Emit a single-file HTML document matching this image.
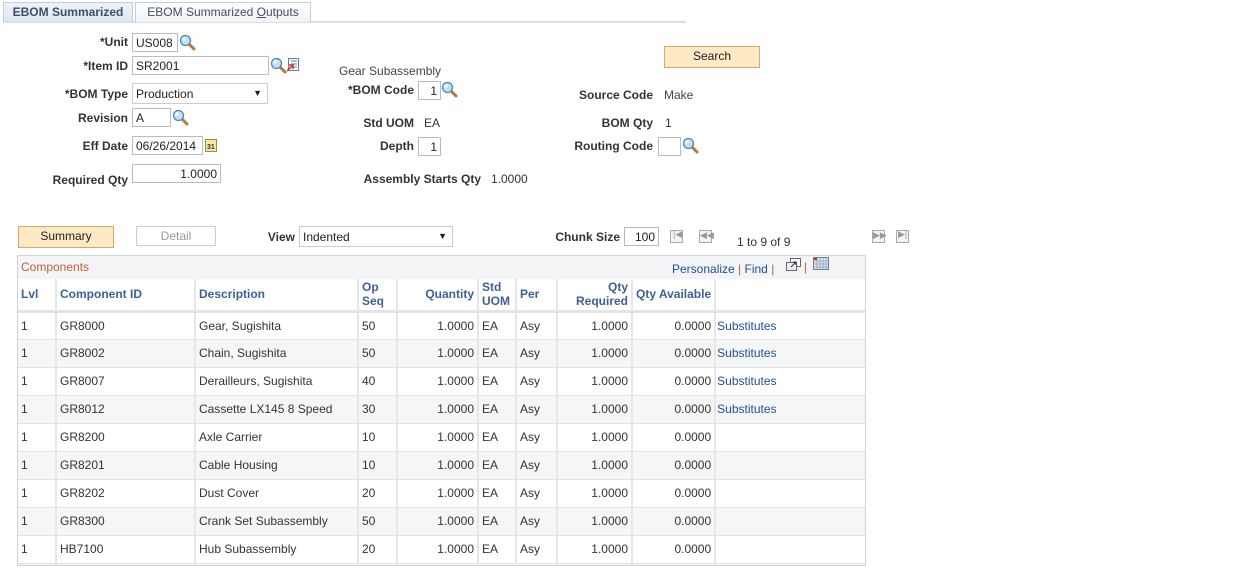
<!DOCTYPE html>
<html><head><meta charset="utf-8"><style>
*{margin:0;padding:0;box-sizing:border-box}
body{width:1257px;height:573px;background:#fff;font-family:"Liberation Sans",Arial,sans-serif;font-size:12px;color:#333;position:relative;overflow:hidden}
.a{position:absolute;white-space:nowrap}
.lb{position:absolute;font-weight:bold;color:#333;text-align:right;white-space:nowrap}
.in{position:absolute;border:1px solid #bbb;background:#fff;padding:1px 3px;height:19px;line-height:16px;font-size:12px;color:#222;white-space:nowrap}
.r{text-align:right}
.mag{position:absolute;width:17px;height:17px}
.btn{position:absolute;background:#fde9c4;border:1px solid #e0a56a;text-align:center;line-height:19px;color:#222}
.nav{position:absolute;width:13px;height:13px;border:1px solid #aaa;background:#f4f4f4}
table{border-collapse:collapse;position:absolute;left:18px;top:279px;width:847px}
td,th{height:28px;font-size:12px;padding:0 3px;border-right:2px solid #e6e6e6;border-bottom:1px solid #e3e3e3;white-space:nowrap;background:#fff}
th{color:#3d6194;font-weight:bold;text-align:left;height:32px;background:#fff;border-bottom:3px solid #e4e4e4;line-height:14px}
tr:nth-child(odd) td{background:#f6f6f6}
td a{color:#234e9a;text-decoration:none}
</style></head><body>
<svg width="0" height="0" style="position:absolute"><defs>
<g id="m"><line x1="9" y1="9" x2="15" y2="15" stroke="#b57a3a" stroke-width="3" stroke-linecap="round"/><circle cx="6.5" cy="6.5" r="5" fill="#bfe0f5" stroke="#4f86b6" stroke-width="1.3"/><circle cx="5" cy="5" r="1.8" fill="#fff" opacity=".8"/></g>
</defs></svg>

<div class="a" style="left:3px;top:21px;width:683px;height:2px;background:#d5e1ee"></div>
<div class="a" style="left:3px;top:2px;width:130px;height:20px;background:linear-gradient(#eef3f9,#dde6f0);border:1px solid #c3cfdc;border-bottom:none;font-weight:bold;color:#3d4f66;line-height:19px;text-align:center">EBOM Summarized</div>
<div class="a" style="left:135px;top:2px;width:176px;height:20px;background:linear-gradient(#fff,#f0f2f5);border:1px solid #c3cfdc;border-bottom:none;color:#3d4f66;line-height:19px;text-align:center">EBOM Summarized <u>O</u>utputs</div>

<div class="lb" style="right:1129px;top:35px">*Unit</div>
<div class="in" style="left:132px;top:33px;width:46px">US008</div>
<svg class="mag" style="left:179px;top:34px"><use href="#m"/></svg>

<div class="lb" style="right:1129px;top:59px">*Item ID</div>
<div class="in" style="left:132px;top:56px;width:137px">SR2001</div>
<svg class="mag" style="left:270px;top:57px"><use href="#m"/></svg>
<svg class="a" style="left:287px;top:58px" width="13" height="14"><rect x="1.5" y=".5" width="10" height="12" fill="#fff" stroke="#5a7fa8"/><line x1="4" y1="3" x2="10" y2="3" stroke="#5a7fa8"/><line x1="4" y1="6" x2="10" y2="6" stroke="#5a7fa8"/><line x1="4" y1="9" x2="10" y2="9" stroke="#5a7fa8"/><path d="M0 13 L6 7 M2 7 L6 7 L6 11" stroke="#d03a2a" stroke-width="1.6" fill="none"/></svg>

<div class="lb" style="right:1129px;top:87px">*BOM Type</div>
<div class="in" style="left:132px;top:83px;width:136px;height:21px;line-height:18px;border-color:#ccc">Production<span style="position:absolute;right:5px;top:0;font-size:9px">▼</span></div>

<div class="lb" style="right:1129px;top:111px">Revision</div>
<div class="in" style="left:132px;top:108px;width:39px">A</div>
<svg class="mag" style="left:172px;top:109px"><use href="#m"/></svg>

<div class="lb" style="right:1129px;top:139px">Eff Date</div>
<div class="in" style="left:132px;top:136px;width:71px">06/26/2014</div>
<svg class="a" style="left:205px;top:138px" width="12" height="14"><rect x=".5" y="1.5" width="11" height="12" fill="#f7e7a8" stroke="#a08a40"/><text x="2" y="11" font-size="7" font-weight="bold" fill="#333" font-family="Liberation Sans">31</text></svg>

<div class="lb" style="right:1129px;top:173px">Required Qty</div>
<div class="in r" style="left:132px;top:164px;width:89px">1.0000</div>

<div class="a" style="left:339px;top:64px;color:#444">Gear Subassembly</div>
<div class="lb" style="right:843px;top:83px">*BOM Code</div>
<div class="in r" style="left:418px;top:81px;width:23px">1</div>
<svg class="mag" style="left:441px;top:81px"><use href="#m"/></svg>
<div class="lb" style="right:843px;top:116px">Std UOM</div>
<div class="a" style="left:424px;top:116px">EA</div>
<div class="lb" style="right:843px;top:139px">Depth</div>
<div class="in r" style="left:418px;top:137px;width:23px">1</div>
<div class="lb" style="right:776px;top:172px">Assembly Starts Qty</div>
<div class="a" style="left:491px;top:172px">1.0000</div>

<div class="btn" style="left:664px;top:46px;width:96px;height:22px">Search</div>
<div class="lb" style="right:604px;top:88px">Source Code</div>
<div class="a" style="left:664px;top:88px;color:#444">Make</div>
<div class="lb" style="right:604px;top:116px">BOM Qty</div>
<div class="a" style="left:665px;top:116px">1</div>
<div class="lb" style="right:604px;top:139px">Routing Code</div>
<div class="in" style="left:658px;top:137px;width:23px"></div>
<svg class="mag" style="left:682px;top:137px"><use href="#m"/></svg>

<div class="btn" style="left:18px;top:226px;width:96px;height:22px">Summary</div>
<div class="a" style="left:136px;top:226px;width:80px;height:20px;border:1px solid #ccc;color:#999;text-align:center;line-height:18px">Detail</div>
<div class="lb" style="right:962px;top:230px">View</div>
<div class="in" style="left:299px;top:226px;width:154px;height:21px;line-height:18px;border-color:#ccc">Indented<span style="position:absolute;right:5px;top:0;font-size:9px">▼</span></div>
<div class="lb" style="right:637px;top:230px">Chunk Size</div>
<div class="in r" style="left:624px;top:227px;width:35px">100</div>
<div class="nav" style="left:670px;top:230px"></div><div class="a" style="left:673px;top:229px;font-size:9px;color:#999">|◀</div>
<div class="nav" style="left:699px;top:230px"></div><div class="a" style="left:700px;top:230px;font-size:9px;color:#999">◀◀</div>
<div class="a" style="left:737px;top:235px;color:#333">1 to 9 of 9</div>
<div class="nav" style="left:872px;top:230px"></div><div class="a" style="left:873px;top:230px;font-size:9px;color:#999">▶▶</div>
<div class="nav" style="left:896px;top:230px"></div><div class="a" style="left:898px;top:229px;font-size:9px;color:#999">▶|</div>

<div class="a" style="left:17px;top:255px;width:849px;height:311px;border:1px solid #ccd3da;background:#f2f4f6"></div>
<div class="a" style="left:21px;top:260px;color:#c0632d">Components</div>
<div class="a" style="left:672px;top:262px;color:#234e9a">Personalize <span style="color:#c0632d">|</span> Find <span style="color:#c0632d">|</span></div>
<svg class="a" style="left:786px;top:258px" width="16" height="14"><rect x="4.5" y=".5" width="10" height="8" fill="#fff" stroke="#667"/><rect x=".5" y="4.5" width="10" height="8" fill="#eee" stroke="#667"/><path d="M5 9 L10 4 M7 4 H10 V7" stroke="#334" fill="none"/></svg>
<div class="a" style="left:804px;top:260px;color:#c0632d">|</div>
<svg class="a" style="left:813px;top:257px" width="16" height="13"><rect x=".5" y=".5" width="15" height="12" fill="#dfe6f0" stroke="#6a7f9c"/><path d="M1 4H15M1 7H15M1 10H15M4 1V12M7 1V12M10 1V12M13 1V12" stroke="#8a9bb5" stroke-width=".7"/><rect x="1" y="1" width="3" height="2" fill="#e02020"/></svg>

<table>
<tr><th style="width:38px">Lvl</th><th style="width:139px">Component ID</th><th style="width:163px">Description</th><th style="width:39px">Op<br>Seq</th><th style="width:81px;text-align:right">Quantity</th><th style="width:38px">Std<br>UOM</th><th style="width:41px">Per</th><th style="width:75px;text-align:right">Qty<br>Required</th><th style="width:80px;text-align:right">Qty Available</th><th style="border-right:none"></th></tr>
<tr><td>1</td><td>GR8000</td><td>Gear, Sugishita</td><td>50</td><td class="r">1.0000</td><td>EA</td><td>Asy</td><td class="r">1.0000</td><td class="r">0.0000</td><td style="padding-left:1px;border-right:none"><a>Substitutes</a></td></tr>
<tr><td>1</td><td>GR8002</td><td>Chain, Sugishita</td><td>50</td><td class="r">1.0000</td><td>EA</td><td>Asy</td><td class="r">1.0000</td><td class="r">0.0000</td><td style="padding-left:1px;border-right:none"><a>Substitutes</a></td></tr>
<tr><td>1</td><td>GR8007</td><td>Derailleurs, Sugishita</td><td>40</td><td class="r">1.0000</td><td>EA</td><td>Asy</td><td class="r">1.0000</td><td class="r">0.0000</td><td style="padding-left:1px;border-right:none"><a>Substitutes</a></td></tr>
<tr><td>1</td><td>GR8012</td><td>Cassette LX145 8 Speed</td><td>30</td><td class="r">1.0000</td><td>EA</td><td>Asy</td><td class="r">1.0000</td><td class="r">0.0000</td><td style="padding-left:1px;border-right:none"><a>Substitutes</a></td></tr>
<tr><td>1</td><td>GR8200</td><td>Axle Carrier</td><td>10</td><td class="r">1.0000</td><td>EA</td><td>Asy</td><td class="r">1.0000</td><td class="r">0.0000</td><td style="border-right:none"></td></tr>
<tr><td>1</td><td>GR8201</td><td>Cable Housing</td><td>10</td><td class="r">1.0000</td><td>EA</td><td>Asy</td><td class="r">1.0000</td><td class="r">0.0000</td><td style="border-right:none"></td></tr>
<tr><td>1</td><td>GR8202</td><td>Dust Cover</td><td>20</td><td class="r">1.0000</td><td>EA</td><td>Asy</td><td class="r">1.0000</td><td class="r">0.0000</td><td style="border-right:none"></td></tr>
<tr><td>1</td><td>GR8300</td><td>Crank Set Subassembly</td><td>50</td><td class="r">1.0000</td><td>EA</td><td>Asy</td><td class="r">1.0000</td><td class="r">0.0000</td><td style="border-right:none"></td></tr>
<tr><td>1</td><td>HB7100</td><td>Hub Subassembly</td><td>20</td><td class="r">1.0000</td><td>EA</td><td>Asy</td><td class="r">1.0000</td><td class="r">0.0000</td><td style="border-right:none"></td></tr>
</table>
</body></html>
